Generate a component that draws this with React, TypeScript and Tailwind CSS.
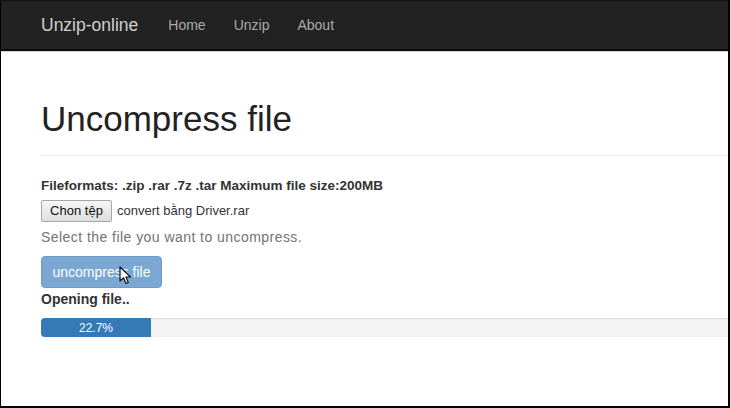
const NAV_LINKS = ['Home', 'Unzip', 'About'];

function Cursor() {
  return (
    <svg width="13" height="19" viewBox="0 0 13 19" className="absolute left-[77px] top-[9px]">
      <path
        d="M1 1 L1 15 L4.5 11.8 L7 17.5 L9.3 16.5 L6.9 11 L11.5 11 Z"
        fill="#fff"
        stroke="#111"
        strokeWidth="1.2"
        strokeLinejoin="round"
      />
    </svg>
  );
}

export default function App() {
  return (
    <div
      className="w-[730px] h-[408px] overflow-hidden bg-white border-l border-r-2 border-b-2 border-black"
      style={{ fontFamily: '"Liberation Sans", Arial, sans-serif' }}
    >
      <nav className="h-[51px] bg-[#222] border-t border-[#111] border-b-2 border-b-[#0c0c0c] flex items-center pl-[40px]">
        <span className="text-[17.5px] text-[#cfcfcf] mr-[16px]">Unzip-online</span>
        {NAV_LINKS.map((link) => (
          <span key={link} className="px-[14px] text-[14px] text-[#aaa]">
            {link}
          </span>
        ))}
      </nav>
      <div className="h-px bg-[#d4d4d4]" />

      <div className="pl-[40px] w-[900px] text-[#333]">
        <h1 className="mt-[47px] text-[35px] leading-[40px] text-[#222]">Uncompress file</h1>
        <div className="mt-[16px] border-t border-[#eee]" />

        <p className="mt-[20px] text-[13.5px] leading-[20px] font-bold">
          Fileformats: .zip .rar .7z .tar Maximum file size:200MB
        </p>
        <div className="mt-[4px] flex items-center gap-[5px]">
          <span className="h-[22px] w-[71px] flex items-center justify-center text-[13px] text-[#111] bg-gradient-to-b from-[#f6f6f6] to-[#dedede] border border-[#a6a6a6] rounded-[2px]">
            Chon tệp
          </span>
          <span className="text-[13px] text-[#333]">convert bằng Driver.rar</span>
        </div>
        <p className="mt-[5px] text-[14px] leading-[20px] tracking-[0.45px] text-[#737373]">
          Select the file you want to uncompress.
        </p>

        <div className="relative mt-[9px] w-[121px] h-[32px] flex items-center justify-center rounded-[4px] bg-[#7aa8d3] border border-[#6f9cc5] text-[14px] text-white">
          uncompress file
          <Cursor />
        </div>

        <p className="mt-[1px] text-[14px] leading-[20px] font-bold">Opening file..</p>

        <div className="mt-[9px] h-[19px] bg-[#f3f3f3] rounded-l-[4px] shadow-[inset_0_1px_2px_rgba(0,0,0,0.1)] flex overflow-hidden">
          <div className="w-[110px] h-full bg-[#337ab7] flex items-center justify-center text-[12px] text-white">
            22.7%
          </div>
        </div>
      </div>
    </div>
  );
}
